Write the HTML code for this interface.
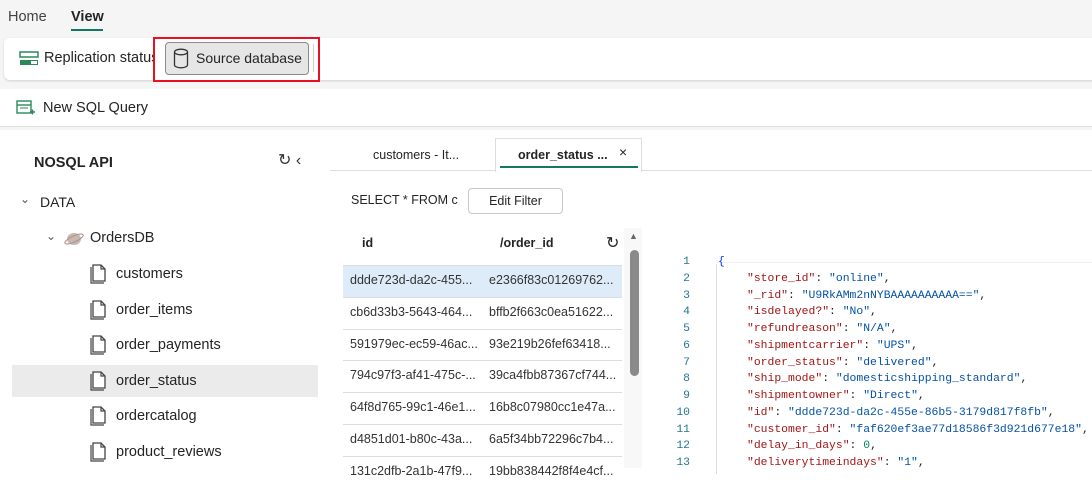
<!DOCTYPE html><html><head><style>
*{margin:0;padding:0;box-sizing:border-box}
body{width:1092px;height:468px;overflow:hidden;background:#fff;font-family:"Segoe UI","Liberation Sans",sans-serif;color:#242424;position:relative;font-size:14px}
.a{position:absolute;white-space:nowrap}
.mono{font-family:"Liberation Mono",monospace;font-size:11.4px}
.k{color:#a31515}.v{color:#0451a5}.n{color:#098658}
</style></head><body>
<div class="a" style="left:0;top:0;width:1092px;height:130px;background:#f5f5f5"></div>
<div class="a" style="left:8px;top:9px;font-size:14.5px;color:#424242">Home</div>
<div class="a" style="left:71px;top:9px;font-size:14.5px;font-weight:bold">View</div>
<div class="a" style="left:71px;top:29px;width:32px;height:2px;background:#117865"></div>
<div class="a" style="left:4px;top:38px;width:1100px;height:42px;background:#fff;border-radius:6px;box-shadow:0 1px 2px rgba(0,0,0,.15)"></div>
<svg class="a" style="left:19px;top:51px" width="20" height="16"><rect x="1" y="1" width="18" height="5" fill="none" stroke="#2a8a5a" stroke-width="1.5"/><rect x="1" y="9" width="18" height="5" fill="#2a8a5a"/><rect x="12" y="10" width="6" height="3" fill="#fff"/></svg>
<div class="a" style="left:44px;top:50px;font-size:14.5px;width:110px;overflow:hidden">Replication status</div>
<div class="a" style="left:153px;top:37px;width:167px;height:45px;border:2px solid #e81123"></div>
<div class="a" style="left:165px;top:42px;width:144px;height:33px;background:#e6e6e6;border:1px solid #8a8a8a;border-radius:4px"></div>
<svg class="a" style="left:172px;top:48px" width="18" height="22"><ellipse cx="9" cy="4" rx="6.5" ry="2.8" fill="none" stroke="#333" stroke-width="1.3"/><path d="M2.5 4v13c0 1.5 3 2.8 6.5 2.8s6.5-1.3 6.5-2.8V4" fill="none" stroke="#333" stroke-width="1.3"/></svg>
<div class="a" style="left:196px;top:50px;font-size:14px">Source database</div>
<div class="a" style="left:313px;top:44px;width:1px;height:28px;background:#ccc"></div>
<div class="a" style="left:0;top:89px;width:1092px;height:38px;background:#fff;border-bottom:1px solid #ddd"></div>
<svg class="a" style="left:16px;top:98px" width="20" height="20"><rect x="1" y="3" width="14" height="12" fill="none" stroke="#2a8a5a" stroke-width="1.4"/><line x1="1" y1="7" x2="15" y2="7" stroke="#2a8a5a" stroke-width="1.4"/><line x1="4" y1="10" x2="12" y2="10" stroke="#2a8a5a"/><path d="M14 14h5M16.5 11.5v5" stroke="#2a8a5a" stroke-width="1.5"/></svg>
<div class="a" style="left:43px;top:100px;font-size:14.5px">New SQL Query</div>
<div class="a" style="left:34px;top:155px;font-size:14.5px;font-weight:bold">NOSQL API</div>
<div class="a" style="left:278px;top:150px;font-size:16px;color:#333">↻ ‹</div>
<div class="a" style="left:20px;top:192px;font-size:12px;color:#555">⌄</div>
<div class="a" style="left:40px;top:194px;font-size:14px">DATA</div>
<div class="a" style="left:46px;top:229px;font-size:12px;color:#555">⌄</div>
<svg class="a" style="left:62px;top:228px" width="22" height="20"><ellipse cx="12" cy="11" rx="7" ry="6" fill="#c9b8b0"/><ellipse cx="12" cy="11" rx="10" ry="3" fill="none" stroke="#a89088" transform="rotate(-25 12 11)"/></svg>
<div class="a" style="left:90px;top:230px;font-size:14.5px">OrdersDB</div>
<div class="a" style="left:12px;top:365px;width:306px;height:32px;background:#ebebeb"></div>
<div id="tree"></div>
<div class="a" style="left:330px;top:138px;width:762px;height:33px;border-bottom:1px solid #ddd"></div>
<div class="a" style="left:373px;top:148px;font-size:12.5px">customers - It...</div>
<div class="a" style="left:495px;top:138px;width:147px;height:34px;background:#fff;border:1px solid #ddd;border-bottom:none"></div>
<div class="a" style="left:518px;top:148px;font-size:12.5px;font-weight:bold">order_status ...</div>
<div class="a" style="left:619px;top:144px;font-size:14px">×</div>
<div class="a" style="left:500px;top:166px;width:138px;height:2px;background:#117865"></div>
<div class="a" style="left:351px;top:193px;font-size:12.5px">SELECT * FROM c</div>
<div class="a" style="left:468px;top:188px;width:95px;height:26px;border:1px solid #c8c8c8;border-radius:4px;font-size:12.5px;text-align:center;line-height:24px">Edit Filter</div>
<div class="a" style="left:362px;top:236px;font-size:12.5px;font-weight:bold">id</div>
<div class="a" style="left:500px;top:236px;font-size:12.5px;font-weight:bold">/order_id</div>
<div class="a" style="left:606px;top:233px;font-size:16px">↻</div>
<div class="a" style="left:624px;top:228px;width:18px;height:240px;background:#f8f8f8"></div>
<div class="a" style="left:629px;top:231px;font-size:9px;color:#666">▲</div>
<div class="a" style="left:630px;top:250px;width:9px;height:126px;border-radius:5px;background:#8a8a8a"></div>
<div id="rows"></div>
<div class="a" style="left:717px;top:262px;width:380px;height:1px;background:#eee"></div>
<div class="a" style="left:716px;top:264px;width:1px;height:210px;background:#ddd"></div>
<div id="code"></div>
<script>
var t=["customers","order_items","order_payments","order_status","ordercatalog","product_reviews"],h="";
t.forEach(function(s,i){var y=264+i*35.6;h+='<svg class="a" style="left:88px;top:'+y+'px" width="20" height="20"><path d="M3 3v16h13" fill="none" stroke="#444" stroke-width="1.2"/><path d="M5 1h8l4 4v12H5z" fill="#fff" stroke="#444" stroke-width="1.3"/><path d="M13 1v4h4" fill="none" stroke="#444" stroke-width="1.2"/></svg><div class="a" style="left:116px;top:'+(y+2)+'px;font-size:14.5px">'+s+'</div>'});
document.getElementById('tree').innerHTML=h;
var r=[["ddde723d-da2c-455...","e2366f83c01269762..."],["cb6d33b3-5643-464...","bffb2f663c0ea51622..."],["591979ec-ec59-46ac...","93e219b26fef63418..."],["794c97f3-af41-475c-...","39ca4fbb87367cf744..."],["64f8d765-99c1-46e1...","16b8c07980cc1e47a..."],["d4851d01-b80c-43a...","6a5f34bb72296c7b4..."],["131c2dfb-2a1b-47f9...","19bb838442f8f4e4cf..."]];h="";
r.forEach(function(a,i){var y=265+i*31.8;h+='<div class="a" style="left:343px;top:'+y+'px;width:279px;height:32px;border-top:1px solid #ddd;'+(i==0?'background:#deecf9;':'')+'"></div><div class="a" style="left:350px;top:'+(y+8)+'px;font-size:12.5px;color:#333">'+a[0]+'</div><div class="a" style="left:489px;top:'+(y+8)+'px;font-size:12.5px;color:#333">'+a[1]+'</div>'});
document.getElementById('rows').innerHTML=h;
var c=['<span style="color:#0431fa">{</span>'],kv=[["store_id",'"online"'],["_rid",'"U9RkAMm2nNYBAAAAAAAAAA=="'],["isdelayed?",'"No"'],["refundreason",'"N/A"'],["shipmentcarrier",'"UPS"'],["order_status",'"delivered"'],["ship_mode",'"domesticshipping_standard"'],["shipmentowner",'"Direct"'],["id",'"ddde723d-da2c-455e-86b5-3179d817f8fb"'],["customer_id",'"faf620ef3ae77d18586f3d921d677e18"'],["delay_in_days","0"],["deliverytimeindays",'"1"']];
kv.forEach(function(p){c.push('<span style="display:inline-block;width:29px"></span><span class="k">"'+p[0]+'"</span>: <span class="'+(p[1]=="0"?'n':'v')+'">'+p[1]+'</span>,')});h="";
c.forEach(function(s,i){var y=256+i*16.75;h+='<div class="a mono" style="left:666px;top:'+y+'px;width:24px;text-align:right;color:#237893">'+(i+1)+'</div><div class="a mono" style="left:718px;top:'+y+'px">'+s+'</div>'});
document.getElementById('code').innerHTML=h;
</script>
</body></html>
